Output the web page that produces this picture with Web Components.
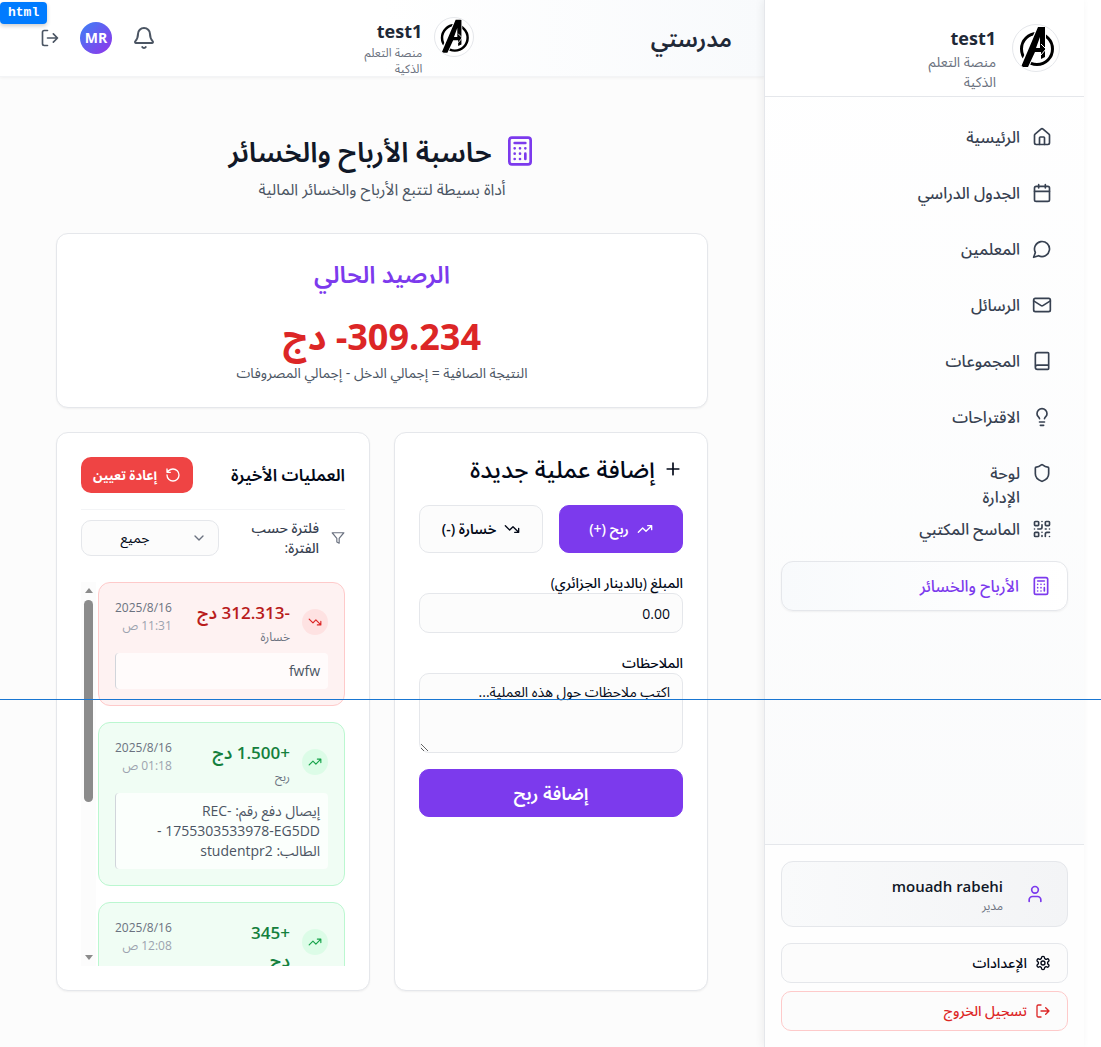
<!DOCTYPE html>
<html lang="ar" dir="rtl">
<head>
<meta charset="utf-8">
<meta name="viewport" content="width=device-width, initial-scale=1">
<title>مدرستي</title>
<style>
  html, body { margin: 0; }
  body {
    background: #fff;
    color: #020817;
    font: 14px/20px "Open Sans", "Noto Sans", "Noto Sans Arabic", sans-serif;
  }
</style>
</head>
<body>
<school-app></school-app>
<script>
const ICONS = {
  home: '<path d="M15 21v-8a1 1 0 0 0-1-1h-4a1 1 0 0 0-1 1v8"/><path d="M3 10a2 2 0 0 1 .709-1.528l7-5.999a2 2 0 0 1 2.582 0l7 5.999A2 2 0 0 1 21 10v9a2 2 0 0 1-2 2H5a2 2 0 0 1-2-2z"/>',
  calendar: '<path d="M8 2v4M16 2v4M3 10h18"/><rect width="18" height="18" x="3" y="4" rx="2"/>',
  chat: '<path d="M7.9 20A9 9 0 1 0 4 16.1L2 22Z"/>',
  mail: '<rect width="20" height="16" x="2" y="4" rx="2"/><path d="m22 7-8.97 5.7a1.94 1.94 0 0 1-2.06 0L2 7"/>',
  book: '<path d="M4 19.5v-15A2.5 2.5 0 0 1 6.5 2H19a1 1 0 0 1 1 1v18a1 1 0 0 1-1 1H6.5a1 1 0 0 1 0-5H20"/>',
  bulb: '<path d="M15 14c.2-1 .7-1.7 1.5-2.5 1-.9 1.5-2.2 1.5-3.5A6 6 0 0 0 6 8c0 1 .2 2.2 1.5 3.5.7.7 1.3 1.5 1.5 2.5M9 18h6M10 22h4"/>',
  shield: '<path d="M20 13c0 5-3.5 7.5-7.66 8.95a1 1 0 0 1-.67-.01C7.5 20.5 4 18 4 13V6a1 1 0 0 1 1-1c2 0 4.5-1.2 6.24-2.72a1.17 1.17 0 0 1 1.52 0C14.51 3.81 17 5 19 5a1 1 0 0 1 1 1z"/>',
  qr: '<rect width="5" height="5" x="3" y="3" rx="1"/><rect width="5" height="5" x="16" y="3" rx="1"/><rect width="5" height="5" x="3" y="16" rx="1"/><path d="M21 16h-3a2 2 0 0 0-2 2v3M21 21v.01M12 7v3a2 2 0 0 1-2 2H7M3 12h.01M12 3h.01M12 16v.01M16 12h1M21 12v.01M12 21v-1"/>',
  calculator: '<rect width="16" height="20" x="4" y="2" rx="2"/><path d="M8 6h8M16 14v4M16 10h.01M12 10h.01M8 10h.01M12 14h.01M8 14h.01M12 18h.01M8 18h.01"/>',
  user: '<path d="M19 21v-2a4 4 0 0 0-4-4H9a4 4 0 0 0-4 4v2"/><circle cx="12" cy="7" r="4"/>',
  gear: '<path d="M12.22 2h-.44a2 2 0 0 0-2 2v.18a2 2 0 0 1-1 1.73l-.43.25a2 2 0 0 1-2 0l-.15-.08a2 2 0 0 0-2.73.73l-.22.38a2 2 0 0 0 .73 2.73l.15.1a2 2 0 0 1 1 1.72v.51a2 2 0 0 1-1 1.74l-.15.09a2 2 0 0 0-.73 2.73l.22.38a2 2 0 0 0 2.73.73l.15-.08a2 2 0 0 1 2 0l.43.25a2 2 0 0 1 1 1.73V20a2 2 0 0 0 2 2h.44a2 2 0 0 0 2-2v-.18a2 2 0 0 1 1-1.73l.43-.25a2 2 0 0 1 2 0l.15.08a2 2 0 0 0 2.73-.73l.22-.39a2 2 0 0 0-.73-2.73l-.15-.08a2 2 0 0 1-1-1.74v-.5a2 2 0 0 1 1-1.74l.15-.09a2 2 0 0 0 .73-2.73l-.22-.38a2 2 0 0 0-2.73-.73l-.15.08a2 2 0 0 1-2 0l-.43-.25a2 2 0 0 1-1-1.73V4a2 2 0 0 0-2-2z"/><circle cx="12" cy="12" r="3"/>',
  logout: '<path d="M9 21H5a2 2 0 0 1-2-2V5a2 2 0 0 1 2-2h4M16 17l5-5-5-5M21 12H9"/>',
  bell: '<path d="M10.268 21a2 2 0 0 0 3.464 0M3.262 15.326A1 1 0 0 0 4 17h16a1 1 0 0 0 .74-1.673C19.41 13.956 18 12.499 18 8A6 6 0 0 0 6 8c0 4.499-1.411 5.956-2.738 7.326"/>',
  plus: '<path d="M5 12h14M12 5v14"/>',
  up: '<path d="m22 7-8.5 8.5-5-5L2 17M16 7h6v6"/>',
  down: '<path d="m22 17-8.5-8.5-5 5L2 7M16 17h6v-6"/>',
  reset: '<path d="M3 12a9 9 0 1 0 9-9 9.75 9.75 0 0 0-6.74 2.74L3 8M3 3v5h5"/>',
  filter: '<path d="M22 3H2l8 9.46V19l4 2v-8.54z"/>',
  chevron: '<path d="m6 9 6 6 6-6"/>'
};

function define(name, template) {
  customElements.define(name, class extends HTMLElement {
    connectedCallback() {
      if (this.shadowRoot) return;
      const root = this.attachShadow({ mode: 'open' });
      root.innerHTML = '<style>*{box-sizing:border-box}h1,h2,p{margin:0}button,input,select,textarea{font:inherit;color:inherit}:host{display:block;box-sizing:border-box}</style>'
        + (typeof template === 'function' ? template(this) : template);
    }
  });
}

define('ui-icon', el => {
  const s = el.getAttribute('size') || 20;
  return `<style>:host{display:block;flex:none;width:${s}px;height:${s}px}svg{display:block}</style>
  <svg width="${s}" height="${s}" viewBox="0 0 24 24" fill="none" stroke="currentColor" stroke-width="2" stroke-linecap="round" stroke-linejoin="round" aria-hidden="true">${ICONS[el.getAttribute('name')]}</svg>`;
});

define('brand-logo', `<style>
  :host{flex:none;border:1px solid #e5e7eb;border-radius:50%;background:#fff;overflow:hidden}
  svg{display:block;width:100%;height:100%}
</style>
<svg viewBox="1 1 46 46" aria-hidden="true">
  <circle cx="25" cy="25" r="15.500" fill="none" stroke="#000" stroke-width="3"/>
  <path d="M26 3h7v21l-4-3v-7l-4 10h4v-3l5 4-5 5v-2h-6l-7 15H8z" fill="#fff" stroke="#fff" stroke-width="2"/>
  <path d="M26 3h7v30l-4 2v-7h-6l-7 15H9zM28 13l-4 11h4z" fill-rule="evenodd"/>
  <path d="m29 20 5 5-5 6" fill="none" stroke="#fff"/>
</svg>`);

define('school-brand', `<style>
  :host{display:flex;align-items:flex-start;gap:var(--brand-gap,12px)}
  brand-logo{width:var(--logo,40px);height:var(--logo,40px)}
  .text{min-width:82px}
  b{display:block;font-size:18px;line-height:28px;font-weight:700;color:#1f2937}
  p{color:#6b7280;font-size:var(--sub,12px);line-height:var(--sub-line,16px)}
</style>
<brand-logo></brand-logo><div class="text"><b>test1</b><p>منصة التعلم<br>الذكية</p></div>`);

define('nav-item', el => `<style>
  a{display:flex;align-items:flex-start;gap:12px;height:48px;padding:12px 16px;border-radius:12px;color:#374151;text-decoration:none;font-size:16px;line-height:24px;font-weight:500}
  ui-icon{margin-top:2px}
  :host([active]) a{height:50px;border:1px solid #e5e7eb;color:#7c3aed;background:linear-gradient(to left,#fff,#f8fafc);box-shadow:0 1px 2px rgba(0,0,0,.05)}
</style><a href="#"><ui-icon name="${el.getAttribute('icon')}"></ui-icon><span><slot></slot></span></a>`);

define('side-bar', `<style>
  :host{display:flex;flex-direction:column;flex:none;width:320px;min-height:100vh;border-left:1px solid #e5e7eb;background:linear-gradient(#fff,#f9fafb);box-shadow:-2px 0 8px rgba(0,0,0,.06);position:relative}
  header{height:97px;padding:24px;background:#fff;border-bottom:1px solid #e5e7eb}
  school-brand{--logo:48px;--brand-gap:16px;--sub:14px;--sub-line:20px}
  nav{flex:1;display:flex;flex-direction:column;gap:8px;padding:16px}
  footer{display:flex;flex-direction:column;gap:8px;padding:16px;background:#fefefe;border-top:1px solid #e5e7eb}
  .user{display:flex;align-items:center;gap:22px;height:66px;padding:0 22px;margin-bottom:8px;border:1px solid #e5e7eb;border-radius:12px;background:linear-gradient(to left,#f3f4f6,#f9fafb)}
  .user ui-icon{color:#7c3aed}
  .user b{display:block;font-size:15px;line-height:24px;font-weight:600;color:#111827}
  .user p{font-size:12px;line-height:16px;color:#6b7280}
  button{display:flex;align-items:center;gap:8px;height:40px;padding:0 16px;border:1px solid #e5e7eb;border-radius:10px;background:#fcfcfc;font-weight:500}
  .out{border-color:#fecaca;color:#dc2626}
</style>
<header><school-brand></school-brand></header>
<nav aria-label="القائمة">
  <nav-item icon="home">الرئيسية</nav-item>
  <nav-item icon="calendar">الجدول الدراسي</nav-item>
  <nav-item icon="chat">المعلمين</nav-item>
  <nav-item icon="mail">الرسائل</nav-item>
  <nav-item icon="book">المجموعات</nav-item>
  <nav-item icon="bulb">الاقتراحات</nav-item>
  <nav-item icon="shield">لوحة<br>الإدارة</nav-item>
  <nav-item icon="qr">الماسح المكتبي</nav-item>
  <nav-item icon="calculator" active>الأرباح والخسائر</nav-item>
</nav>
<footer>
  <div class="user"><ui-icon name="user"></ui-icon><div><b>mouadh rabehi</b><p>مدير</p></div></div>
  <button><ui-icon name="gear" size="16"></ui-icon>الإعدادات</button>
  <button class="out"><ui-icon name="logout" size="16"></ui-icon>تسجيل الخروج</button>
</footer>`);

define('top-bar', `<style>
  :host{display:flex;align-items:center;justify-content:space-between;height:77px;padding:0 32px;border-bottom:1px solid #f3f4f6;background:linear-gradient(to left,#f8fafc,#fff 50%);box-shadow:0 1px 3px rgba(0,0,0,.05)}
  h2{font-size:23px;line-height:32px;font-weight:600;color:#1f2937}
  school-brand{height:42px}
  div{display:flex;align-items:center;gap:12px;color:#4b5563}
  button{display:grid;place-items:center;width:40px;height:40px;padding:0;border:0;background:none}
  button.small{width:36px}
  span{display:grid;place-items:center;width:32px;height:32px;border-radius:50%;background:linear-gradient(135deg,#3b82f6,#9333ea);color:#fff;font-weight:700}
</style>
<h2>مدرستي</h2>
<school-brand></school-brand>
<div><button aria-label="الإشعارات"><ui-icon name="bell" size="24"></ui-icon></button><span>MR</span><button class="small" aria-label="خروج"><ui-icon name="logout"></ui-icon></button></div>`);

define('ui-card', `<style>
  :host{padding:24px;border:1px solid #e5e7eb;border-radius:12px;background:#fff;box-shadow:0 1px 2px rgba(0,0,0,.05);min-width:0}
</style><slot></slot>`);

define('page-title', `<style>
  :host{text-align:center}
  h1{display:flex;align-items:center;justify-content:center;gap:12px;font-size:28px;line-height:36px;font-weight:600;color:#111827}
  ui-icon{color:#7c3aed}
  p{margin-top:8px;font-size:16px;line-height:24px;color:#4b5563}
</style>
<h1><ui-icon name="calculator" size="32"></ui-icon>حاسبة الأرباح والخسائر</h1>
<p>أداة بسيطة لتتبع الأرباح والخسائر المالية</p>`);

define('balance-card', `<style>
  :host{text-align:center}
  h2{font-size:24px;line-height:32px;font-weight:600;color:#7c3aed}
  b{display:block;margin:27px 0 6px;font-size:36px;line-height:40px;font-weight:700;color:#dc2626}
  p{color:#4b5563}
</style>
<ui-card><h2>الرصيد الحالي</h2><b>&lrm;-309.234 دج</b><p>النتيجة الصافية = إجمالي الدخل - إجمالي المصروفات</p></ui-card>`);

define('entry-form', `<style>
  :host{display:grid;min-width:0}
  h2{display:flex;align-items:center;gap:8px;font-size:24px;line-height:24px;font-weight:500}
  .kinds{display:grid;grid-template-columns:1fr 1fr;gap:16px;margin-top:24px}
  button{display:flex;align-items:center;justify-content:center;gap:8px;width:100%;height:48px;padding:0;border:1px solid #e5e7eb;border-radius:10px;background:#fcfcfc;font-weight:600}
  button.main{background:#7c3aed;border-color:#7c3aed;color:#fff}
  label{display:block;margin-top:20px;font-weight:500}
  input,textarea{display:block;width:100%;height:40px;margin:0;padding:8px 12px;border:1px solid #e5e7eb;border-radius:10px;background:#fcfcfc}
  textarea{height:80px;resize:vertical}
  ::placeholder{color:#020817;opacity:1}
  .send{margin-top:16px;font-size:18px}
</style>
<ui-card>
  <h2><ui-icon name="plus"></ui-icon>إضافة عملية جديدة</h2>
  <div class="kinds">
    <button class="main"><ui-icon name="up" size="16"></ui-icon>ربح (+)</button>
    <button><ui-icon name="down" size="16"></ui-icon>خسارة (-)</button>
  </div>
  <label for="amount">المبلغ (بالدينار الجزائري)</label>
  <input id="amount" placeholder="0.00" inputmode="decimal">
  <label for="notes">الملاحظات</label>
  <textarea id="notes" placeholder="اكتب ملاحظات حول هذه العملية..."></textarea>
  <button class="main send">إضافة ربح</button>
</ui-card>`);

define('operation-item', el => {
  const loss = el.getAttribute('kind') === 'loss';
  return `<style>
  :host{flex:none;padding:16px;border:1px solid ${loss ? '#fecaca' : '#bbf7d0'};border-radius:12px;background:${loss ? '#fef2f2' : '#f0fdf4'}}
  .row{display:flex;align-items:flex-start;gap:12px}
  .dot{flex:none;margin-top:10px;padding:6px;border-radius:50%;background:${loss ? '#fee2e2' : '#dcfce7'};color:${loss ? '#dc2626' : '#16a34a'}}
  .sum{flex:1}
  b{display:block;font-size:17px;line-height:28px;font-weight:600;color:${loss ? '#b91c1c' : '#15803d'}}
  small{display:block;font-size:12px;line-height:18px;color:#6b7280}
  .sum small{margin-top:2px;line-height:16px}
  small.time{color:#9ca3af}
  .note{margin-top:8px;padding:8px;border-left:1px solid #d1d5db;border-radius:4px;background:rgba(255,255,255,.7) padding-box;color:#4b5563}
  </style>
  <div class="row"><span class="dot"><ui-icon name="${loss ? 'down' : 'up'}" size="14"></ui-icon></span>
  <div class="sum"><b><slot name="amount"></slot></b><small>${loss ? 'خسارة' : 'ربح'}</small></div>
  <div><small>2025/8/16</small><small class="time">${el.getAttribute('time')}</small></div></div>
  <div class="note"><slot></slot></div>`;
});

define('scroll-track', `<style>
  :host{display:flex;flex-direction:column;align-items:center;justify-content:space-between;flex:none;width:15px;padding:6px 0;background:#fcfcfc}
  i{border:4px solid transparent}
  .up{border-top:0;border-bottom:5px solid #8b8b8b}
  .down{border-bottom:0;border-top:5px solid #8b8b8b}
  div{flex:1;width:9px;margin:7px 0 6px}
  span{display:block;height:58%;border-radius:5px;background:#8b8b8b}
</style><i class="up"></i><div><span></span></div><i class="down"></i>`);

define('operation-list', `<style>
  :host{display:grid;min-width:0}
  .head{display:flex;align-items:center;justify-content:space-between;padding-bottom:16px;border-bottom:1px solid #f3f4f6}
  h2{font-size:17px;line-height:28px;font-weight:600}
  button{display:flex;align-items:center;gap:8px;height:36px;padding:0 12px;border:0;border-radius:10px;background:#ef4444;color:#fff;font-size:13px;font-weight:700}
  .filter{display:flex;align-items:center;gap:12px;margin:8px 0 24px;color:#6b7280}
  label{flex:1;color:#374151;font-weight:500}
  .pick{display:grid;align-items:center;flex:none;width:138px}
  .pick > *{grid-area:1/1}
  select{appearance:none;width:100%;height:36px;margin:0;padding:0 42px 0 12px;border:1px solid #e5e7eb;border-radius:10px;background:#fcfcfc;color:#020817;text-align:center;text-align-last:center}
  .pick ui-icon{margin-right:12px;pointer-events:none}
  .view{display:flex;gap:2px;height:384px}
  .items{flex:1;min-width:0;display:flex;flex-direction:column;gap:16px;overflow:hidden}
</style>
<ui-card>
  <div class="head"><h2>العمليات الأخيرة</h2><button><ui-icon name="reset" size="16"></ui-icon>إعادة تعيين</button></div>
  <div class="filter"><ui-icon name="filter" size="14"></ui-icon><label for="period">فلترة حسب<br>الفترة:</label>
    <div class="pick"><select id="period"><option>جميع</option></select><ui-icon name="chevron" size="16"></ui-icon></div></div>
  <div class="view">
    <div class="items">
      <operation-item kind="loss" time="11:31 ص"><span slot="amount">-312.313 دج</span>fwfw</operation-item>
      <operation-item kind="gain" time="01:18 ص"><span slot="amount">+1.500 دج</span>إيصال دفع رقم: REC-1755303533978-EG5DD - الطالب: studentpr2</operation-item>
      <operation-item kind="gain" time="12:08 ص"><span slot="amount">+345<br>دج</span></operation-item>
    </div>
    <scroll-track></scroll-track>
  </div>
</ui-card>`);

define('inspect-overlay', `<style>
  :host{position:absolute;inset:0;pointer-events:none}
  span{position:absolute;left:0;top:2px;padding:0 8px;border-radius:4px;background:#007bff;color:#fff;font:700 13px/22px "Liberation Mono",monospace;box-shadow:0 2px 4px rgba(0,0,0,.2)}
  i{position:absolute;left:0;right:0;top:699px;border-top:1px solid #1976d2}
</style><i></i><span>html</span>`);

define('school-app', `<style>
  :host{display:flex;position:relative;min-height:100vh;padding-right:17px}
  .page{flex:1;min-width:0;background:#fcfcfc}
  main{padding:56px}
  balance-card{margin:32px 0 24px}
  .cols{display:grid;grid-template-columns:1fr 1fr;gap:24px}
</style>
<side-bar></side-bar>
<div class="page">
  <top-bar></top-bar>
  <main>
    <page-title></page-title>
    <balance-card></balance-card>
    <div class="cols"><entry-form></entry-form><operation-list></operation-list></div>
  </main>
</div>
<inspect-overlay></inspect-overlay>`);
</script>
</body>
</html>
